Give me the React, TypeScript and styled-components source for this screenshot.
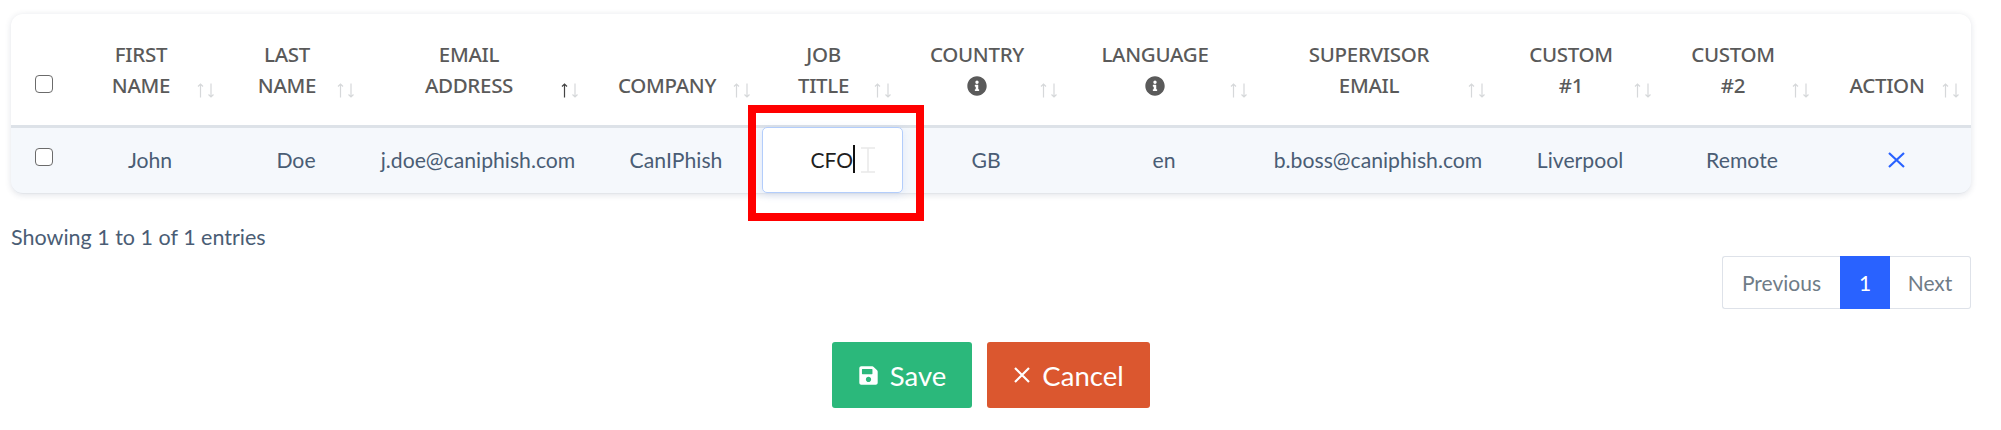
import React from "react";
import styled, { createGlobalStyle } from "styled-components";
import { FaInfoCircle, FaSave } from "react-icons/fa";

const GlobalStyle = createGlobalStyle`
  html, body {
    margin: 0;
    background: #fff;
    font-family: "Lato", "Noto Sans", sans-serif;
    color: #4a5d75;
  }
`;

const Page = styled.div`
  width: 2001px;
  height: 430px;
  overflow: hidden;
  box-sizing: border-box;
  padding: 14px 30px 0 11px;
`;

const Card = styled.div`
  position: relative;
  width: 1960px;
  height: 180px;
  border-radius: 12px;
  background: #fff;
  box-shadow: 0 1px 6px rgba(40, 60, 90, 0.14);
`;

const Table = styled.table`
  width: 1960px;
  table-layout: fixed;
  border-collapse: separate;
  border-spacing: 0;
`;

const HeadCell = styled.th`
  position: relative;
  height: 114px;
  box-sizing: border-box;
  padding: 0 18px 24px 0;
  border-bottom: 3px solid #dde2e8;
  vertical-align: bottom;
  text-align: center;
  font-family: "Noto Sans", sans-serif;
  font-size: 20.5px;
  font-weight: 500;
  line-height: 31px;
  letter-spacing: -0.3px;
  color: #5a5a5a;
`;

const HeadInner = styled.span`
  display: block;
`;

const InfoLine = styled.span`
  display: flex;
  justify-content: center;
  align-items: center;
  height: 31px;
  font-size: 20px;
`;

const SortIcon = styled.svg`
  position: absolute;
  right: 11px;
  bottom: 27px;
  width: 18px;
  height: 15px;
`;

const Row = styled.tr`
  background: #f5f8fc;
`;

const BodyCell = styled.td`
  height: 66px;
  box-sizing: border-box;
  padding: 0 0 2px;
  border-bottom: 1px solid #e3e6ea;
  text-align: center;
  font-size: 21.2px;
  color: #4a5d75;

  &:first-child {
    border-bottom-left-radius: 12px;
  }

  &:last-child {
    border-bottom-right-radius: 12px;
  }
`;

const CheckHead = styled(HeadCell)`
  padding: 0 0 24px 0;
`;

const Check = styled.input.attrs({ type: "checkbox" })`
  appearance: none;
  display: block;
  width: 18px;
  height: 18px;
  margin: 0 0 0 24px;
  border: 1.5px solid #6b6b6b;
  border-radius: 4px;
  background: #fff;
`;

const HeadCheck = styled(Check)`
  margin-bottom: 8px;
`;

const BodyCheck = styled(Check)`
  margin-top: -6px;
`;

const EditCell = styled(BodyCell)`
  position: relative;
`;

const EditBox = styled.div`
  position: absolute;
  left: 0;
  right: 0;
  top: -1px;
  bottom: 0;
  display: flex;
  align-items: center;
  justify-content: center;
  box-sizing: border-box;
  padding-bottom: 2px;
  border: 1px solid #b3cdfb;
  border-radius: 5px;
  background: #fff;
  box-shadow: 0 2px 10px rgba(70, 120, 220, 0.12);
  color: #1f1f1f;
  font-size: 21px;
`;

const Caret = styled.span`
  width: 1.5px;
  height: 28px;
  background: #111;
`;

const Cursor = styled.svg`
  position: absolute;
  left: 97px;
  top: 19px;
  width: 16px;
  height: 26px;
`;

const Highlight = styled.div`
  position: absolute;
  left: 737px;
  top: 91px;
  width: 176px;
  height: 116px;
  box-sizing: border-box;
  border: 8px solid #ff0000;
  pointer-events: none;
`;

const RemoveIcon = styled.svg`
  display: block;
  margin: 0 auto;
  width: 18px;
  height: 16px;
`;

const Summary = styled.div`
  margin-top: 31px;
  font-size: 21.5px;
  line-height: 24px;
  color: #4a5d75;
`;

const Pager = styled.div`
  display: flex;
  justify-content: flex-end;
  margin-top: 7px;
`;

const PagerButton = styled.div<{ $active?: boolean; $w: number }>`
  display: flex;
  align-items: center;
  justify-content: center;
  box-sizing: border-box;
  width: ${({ $w }) => $w}px;
  height: 53px;
  font-size: 21px;
  color: ${({ $active }) => ($active ? "#fff" : "#6f7c87")};
  background: ${({ $active }) => ($active ? "#2962ff" : "#fff")};
  border: 1px solid ${({ $active }) => ($active ? "#2962ff" : "#dee2e9")};
  border-left-width: ${({ $active }) => ($active ? 1 : 0)}px;
  border-right-width: ${({ $active }) => ($active ? 1 : 0)}px;

  &:first-child {
    border-left-width: 1px;
    border-radius: 3px 0 0 3px;
  }

  &:last-child {
    border-right-width: 1px;
    border-radius: 0 3px 3px 0;
  }
`;

const Actions = styled.div`
  display: flex;
  justify-content: center;
  gap: 15px;
  width: 1960px;
  margin-top: 33px;
`;

const ActionButton = styled.button<{ $color: string; $w: number }>`
  display: flex;
  align-items: center;
  justify-content: center;
  gap: 11px;
  width: ${({ $w }) => $w}px;
  height: 66px;
  padding: 0;
  border: none;
  border-radius: 3px;
  background: ${({ $color }) => $color};
  color: #fff;
  font-family: "Lato", "Noto Sans", sans-serif;
  font-size: 27.5px;
`;

const widths = [63, 152, 140, 224, 172, 141, 166, 190, 238, 166, 158, 150];

const Sort = ({ active }: { active?: boolean }) => (
  <SortIcon viewBox="0 0 18 15" fill="none" strokeWidth="1.2">
    <path
      d="M3.5 14.5V1M1 3.5 3.5 1 6 3.5"
      stroke={active ? "#444" : "#d6d8da"}
    />
    <path d="M14 .5V14M11.5 11.5 14 14l2.5-2.5" stroke="#d6d8da" />
  </SortIcon>
);

const headers: { lines: string[]; info?: boolean; active?: boolean }[] = [
  { lines: ["FIRST", "NAME"] },
  { lines: ["LAST", "NAME"] },
  { lines: ["EMAIL", "ADDRESS"], active: true },
  { lines: ["COMPANY"] },
  { lines: ["JOB", "TITLE"] },
  { lines: ["COUNTRY"], info: true },
  { lines: ["LANGUAGE"], info: true },
  { lines: ["SUPERVISOR", "EMAIL"] },
  { lines: ["CUSTOM", "#1"] },
  { lines: ["CUSTOM", "#2"] },
  { lines: ["ACTION"] },
];

export default function App() {
  return (
    <Page>
      <GlobalStyle />
      <Card>
        <Table>
          <colgroup>
            {widths.map((w, i) => (
              <col key={i} width={w} />
            ))}
          </colgroup>
          <thead>
            <tr>
              <CheckHead>
                <HeadCheck />
              </CheckHead>
              {headers.map((h) => (
                <HeadCell key={h.lines.join(" ")}>
                  {h.lines.map((l) => (
                    <HeadInner key={l}>{l}</HeadInner>
                  ))}
                  {h.info && (
                    <InfoLine>
                      <FaInfoCircle />
                    </InfoLine>
                  )}
                  <Sort active={h.active} />
                </HeadCell>
              ))}
            </tr>
          </thead>
          <tbody>
            <Row>
              <BodyCell>
                <BodyCheck />
              </BodyCell>
              <BodyCell>John</BodyCell>
              <BodyCell>Doe</BodyCell>
              <BodyCell>j.doe@caniphish.com</BodyCell>
              <BodyCell>CanIPhish</BodyCell>
              <EditCell>
                <EditBox>
                  CFO
                  <Caret />
                  <Cursor viewBox="0 0 16 26" fill="none" stroke="#e9e9e9" strokeWidth="1.5">
                    <path d="M1 1h14M8 1v24M1 25h14" />
                  </Cursor>
                </EditBox>
              </EditCell>
              <BodyCell>GB</BodyCell>
              <BodyCell>en</BodyCell>
              <BodyCell>b.boss@caniphish.com</BodyCell>
              <BodyCell>Liverpool</BodyCell>
              <BodyCell>Remote</BodyCell>
              <BodyCell>
                <RemoveIcon viewBox="0 0 18 16" fill="none" stroke="#2962ff" strokeWidth="2.2">
                  <path d="M2 1 17 15M17 1 2 15" />
                </RemoveIcon>
              </BodyCell>
            </Row>
          </tbody>
        </Table>
        <Highlight />
      </Card>
      <Summary>Showing 1 to 1 of 1 entries</Summary>
      <Pager>
        <PagerButton $w={118}>Previous</PagerButton>
        <PagerButton $w={50} $active>
          1
        </PagerButton>
        <PagerButton $w={81}>Next</PagerButton>
      </Pager>
      <Actions>
        <ActionButton $color="#2bb87b" $w={140}>
          <FaSave size={21} />
          Save
        </ActionButton>
        <ActionButton $color="#db572f" $w={163}>
          <svg width="18" height="18" viewBox="0 0 18 18" fill="none" stroke="#fff" strokeWidth="2.2">
            <path d="M2 2l14 14M16 2 2 16" />
          </svg>
          Cancel
        </ActionButton>
      </Actions>
    </Page>
  );
}
